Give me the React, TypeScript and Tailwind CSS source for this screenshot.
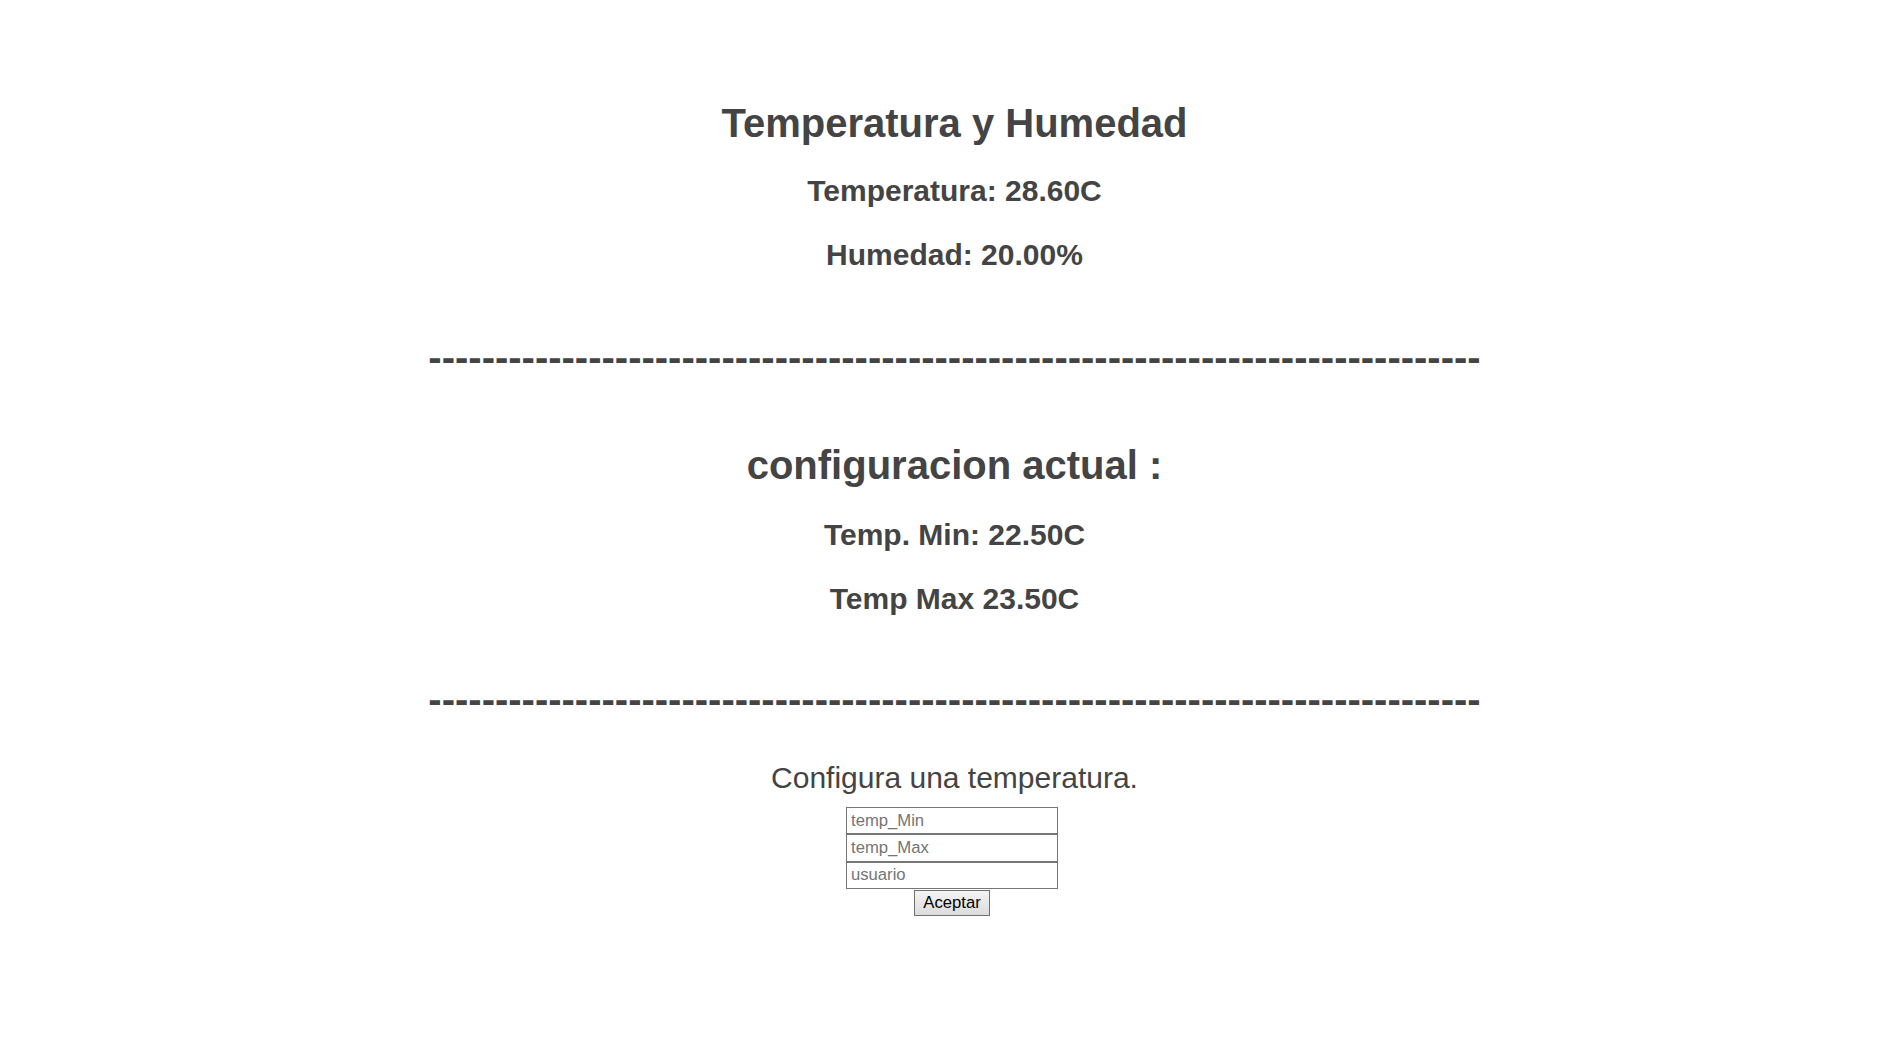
import React from "react";

export default function App() {
  const dashes = "-".repeat(79);
  return (
    <div
      className="min-h-[1041px] w-full bg-white text-center text-[#444444]"
      style={{ fontFamily: '"Liberation Sans", Arial, sans-serif' }}
    >
      <div className="flex flex-col items-center pl-[5px] pt-[100px]">
        <h1 className="text-[40px] font-bold leading-[46px]">Temperatura y Humedad</h1>
        <p className="mt-[27.5px] text-[30px] font-bold leading-[34.5px]">Temperatura: 28.60C</p>
        <p className="mt-[30px] text-[30px] font-bold leading-[34.5px]">Humedad: 20.00%</p>
        <div className="mt-[61.5px] whitespace-nowrap text-[40px] font-bold leading-[46px]">{dashes}</div>

        <h1 className="mt-[62px] text-[40px] font-bold leading-[46px]">configuracion actual :</h1>
        <p className="mt-[30px] text-[30px] font-bold leading-[34.5px]">Temp. Min: 22.50C</p>
        <p className="mt-[29px] text-[30px] font-bold leading-[34.5px]">Temp Max 23.50C</p>
        <div className="mt-[60px] whitespace-nowrap text-[40px] font-bold leading-[46px]">{dashes}</div>

        <p className="mt-[38.5px] text-[30px] leading-[34.5px]">Configura una temperatura.</p>
        <form className="mr-[5px] mt-[12px] flex flex-col items-center" onSubmit={(e) => e.preventDefault()}>
          <input
            type="text"
            placeholder="temp_Min"
            className="box-border block h-[27.33px] w-[212px] border border-[#767676] bg-white pl-[4px] text-left text-[16.67px] leading-[19px] text-black outline-none placeholder:text-[#757575]"
          />
          <input
            type="text"
            placeholder="temp_Max"
            className="box-border block h-[27.33px] w-[212px] border border-[#767676] bg-white pl-[4px] text-left text-[16.67px] leading-[19px] text-black outline-none placeholder:text-[#757575]"
          />
          <input
            type="text"
            placeholder="usuario"
            className="box-border block h-[27.33px] w-[212px] border border-[#767676] bg-white pl-[4px] text-left text-[16.67px] leading-[19px] text-black outline-none placeholder:text-[#757575]"
          />
          <button
            type="submit"
            className="mt-[1px] box-border h-[26px] w-[76px] border border-[#707070] bg-gradient-to-b from-[#f4f4f4] to-[#dcdcdc] text-[16.67px] leading-[19px] text-black"
          >
            Aceptar
          </button>
        </form>
      </div>
    </div>
  );
}
